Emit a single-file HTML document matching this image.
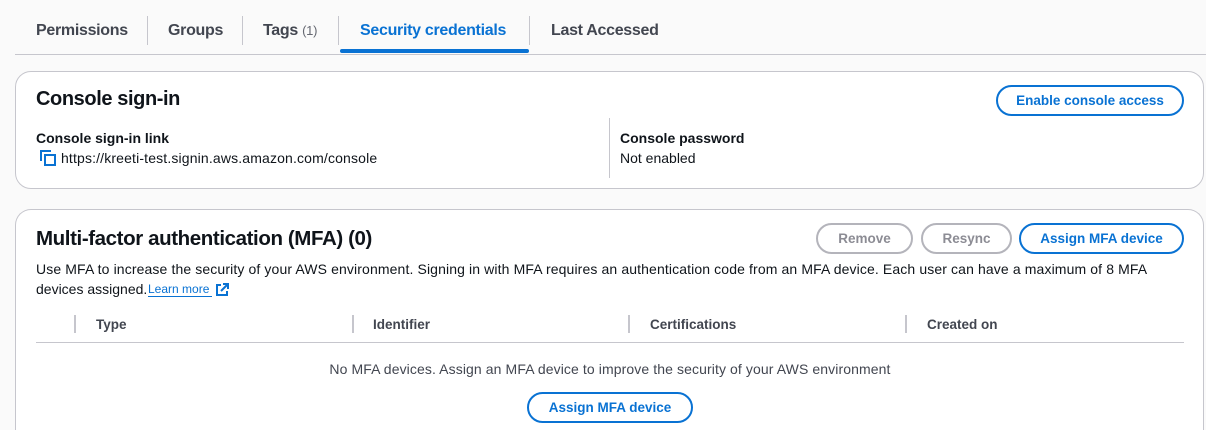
<!DOCTYPE html>
<html style="width:1206px;height:430px;overflow:hidden"><head><meta charset="utf-8"><style>
*{box-sizing:border-box;margin:0;padding:0}
body{width:1206px;height:430px;overflow:hidden;background:#fafafa;font-family:"Liberation Sans",sans-serif;color:#0f141a;position:relative;font-size:14px}
.a{position:absolute;white-space:nowrap}
.tab{font-weight:bold;font-size:16px;color:#424650;top:22px;letter-spacing:-0.3px}
.sep{position:absolute;top:16px;width:1px;height:29px;background:#c6c6cd}
.card{position:absolute;background:#fff;border:1px solid #c6c6cd;border-radius:16px}
.btn{position:absolute;border:2px solid #0972d3;border-radius:20px;color:#0972d3;font-weight:bold;font-size:13.5px;text-align:center;background:#fff}
.dis{border-color:#b4b4bb;color:#8c8c94}
.th{position:absolute;top:317px;font-weight:bold;font-size:13.5px;color:#424650}
.tsep{position:absolute;top:315px;width:2px;height:18px;background:#c6c6cd}
</style></head><body>
<div class="a tab" style="left:36px">Permissions</div>
<div class="sep" style="left:147px"></div>
<div class="a tab" style="left:168px">Groups</div>
<div class="sep" style="left:242px"></div>
<div class="a tab" style="left:263px">Tags <span style="font-weight:normal;font-size:13px;color:#656871">(1)</span></div>
<div class="sep" style="left:338px"></div>
<div class="a tab" style="left:360px;color:#0972d3">Security credentials</div>
<div style="position:absolute;left:340px;top:49px;width:189px;height:4px;background:#0972d3;border-radius:2px"></div>
<div class="sep" style="left:529px"></div>
<div class="a tab" style="left:551px">Last Accessed</div>
<div style="position:absolute;left:15px;top:54px;width:1191px;height:1px;background:#c6c6cd"></div>

<div class="card" style="left:15px;top:71px;width:1189px;height:118px"></div>
<div class="a" style="left:36px;top:88px;font-size:20px;font-weight:bold;letter-spacing:-0.4px">Console sign-in</div>
<div class="btn" style="left:996px;top:85px;width:188px;height:31px;line-height:27px">Enable console access</div>
<div class="a" style="left:36px;top:130px;font-weight:bold">Console sign-in link</div>
<svg class="a" style="left:40px;top:150px" width="16" height="16" viewBox="0 0 16 16"><path d="M1 11V1h10" fill="none" stroke="#0972d3" stroke-width="2"/><rect x="5" y="5" width="10" height="10" fill="none" stroke="#0972d3" stroke-width="2"/></svg>
<div class="a" style="left:61px;top:150px;letter-spacing:0.15px">https://kreeti-test.signin.aws.amazon.com/console</div>
<div style="position:absolute;left:609px;top:118px;width:1px;height:60px;background:#c6c6cd"></div>
<div class="a" style="left:620px;top:130px;font-weight:bold">Console password</div>
<div class="a" style="left:620px;top:150px">Not enabled</div>

<div class="card" style="left:15px;top:209px;width:1189px;height:221px;border-bottom:none;border-radius:16px 16px 0 0"></div>
<div class="a" style="left:36px;top:227px;font-size:20.5px;font-weight:bold;letter-spacing:-0.4px">Multi-factor authentication (MFA) (0)</div>
<div class="btn dis" style="left:816px;top:223px;width:97px;height:31px;line-height:27px">Remove</div>
<div class="btn dis" style="left:921px;top:223px;width:91px;height:31px;line-height:27px">Resync</div>
<div class="btn" style="left:1019px;top:223px;width:165px;height:31px;line-height:27px">Assign MFA device</div>
<div class="a" style="left:36px;top:261px;letter-spacing:0.12px">Use MFA to increase the security of your AWS environment. Signing in with MFA requires an authentication code from an MFA device. Each user can have a maximum of 8 MFA</div>
<div class="a" style="left:36px;top:281px">devices assigned.</div>
<div class="a" style="left:148px;top:282px;color:#0972d3;font-size:12px;border-bottom:1px solid #0972d3;width:64px">Learn more</div>
<svg class="a" style="left:215px;top:283px" width="14" height="14" viewBox="0 0 14 14"><path d="M6 2H2v10h10V8M8 1h5v5M13 1L6 8" fill="none" stroke="#0972d3" stroke-width="2"/></svg>
<div class="tsep" style="left:74px"></div>
<div class="th" style="left:96px">Type</div>
<div class="tsep" style="left:352px"></div>
<div class="th" style="left:373px">Identifier</div>
<div class="tsep" style="left:628px"></div>
<div class="th" style="left:650px">Certifications</div>
<div class="tsep" style="left:905px"></div>
<div class="th" style="left:927px">Created on</div>
<div style="position:absolute;left:36px;top:342px;width:1148px;height:1px;background:#c6c6cd"></div>
<div class="a" style="left:36px;width:1148px;text-align:center;top:361px;color:#424650;letter-spacing:0.1px">No MFA devices. Assign an MFA device to improve the security of your AWS environment</div>
<div class="btn" style="left:527px;top:392px;width:166px;height:31px;line-height:27px">Assign MFA device</div>
</body></html>
